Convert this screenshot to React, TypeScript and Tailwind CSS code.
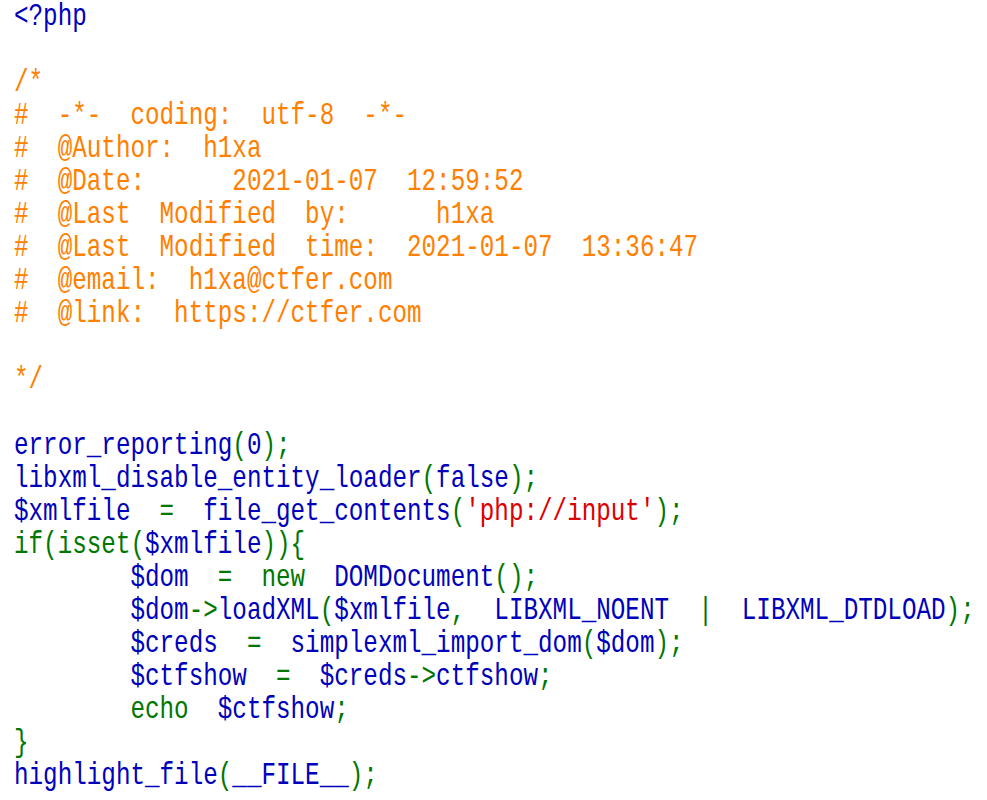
import React from 'react';

type Tok = [string, string];

const B = 'text-[#0000BB]';
const G = 'text-[#007700]';
const O = 'text-[#FF8000]';
const R = 'text-[#DD0000]';

const IND = '        ';

const lines: Tok[][] = [
  [[B, '<?php']],
  [],
  [[O, '/*']],
  [[O, '#  -*-  coding:  utf-8  -*-']],
  [[O, '#  @Author:  h1xa']],
  [[O, '#  @Date:      2021-01-07  12:59:52']],
  [[O, '#  @Last  Modified  by:      h1xa']],
  [[O, '#  @Last  Modified  time:  2021-01-07  13:36:47']],
  [[O, '#  @email:  h1xa@ctfer.com']],
  [[O, '#  @link:  https://ctfer.com']],
  [],
  [[O, '*/']],
  [],
  [[B, 'error_reporting'], [G, '('], [B, '0'], [G, ');']],
  [[B, 'libxml_disable_entity_loader'], [G, '('], [B, 'false'], [G, ');']],
  [[B, '$xmlfile  '], [G, '=  '], [B, 'file_get_contents'], [G, '('], [R, "'php://input'"], [G, ');']],
  [[G, 'if(isset('], [B, '$xmlfile'], [G, ')){']],
  [[B, IND + '$dom  '], [G, '=  new  '], [B, 'DOMDocument'], [G, '();']],
  [[B, IND + '$dom'], [G, '->'], [B, 'loadXML'], [G, '('], [B, '$xmlfile'], [G, ',  '], [B, 'LIBXML_NOENT  '], [G, '|  '], [B, 'LIBXML_DTDLOAD'], [G, ');']],
  [[B, IND + '$creds  '], [G, '=  '], [B, 'simplexml_import_dom'], [G, '('], [B, '$dom'], [G, ');']],
  [[B, IND + '$ctfshow  '], [G, '=  '], [B, '$creds'], [G, '->'], [B, 'ctfshow'], [G, ';']],
  [[G, IND + 'echo  '], [B, '$ctfshow'], [G, ';']],
  [[G, '}']],
  [[B, 'highlight_file'], [G, '('], [B, '__FILE__'], [G, ');']],
];

export default function App() {
  return (
    <div className="h-screen w-full overflow-hidden bg-white pl-[14px]">
      <code className="block origin-top-left scale-x-[0.758] whitespace-pre font-['Liberation_Mono',monospace] text-[32px] leading-[33px]">
        {lines.map((toks, i) => (
          <div key={i} className="h-[33px]">
            {toks.map(([c, t], j) => (
              <span key={j} className={c}>
                {t}
              </span>
            ))}
          </div>
        ))}
      </code>
    </div>
  );
}
